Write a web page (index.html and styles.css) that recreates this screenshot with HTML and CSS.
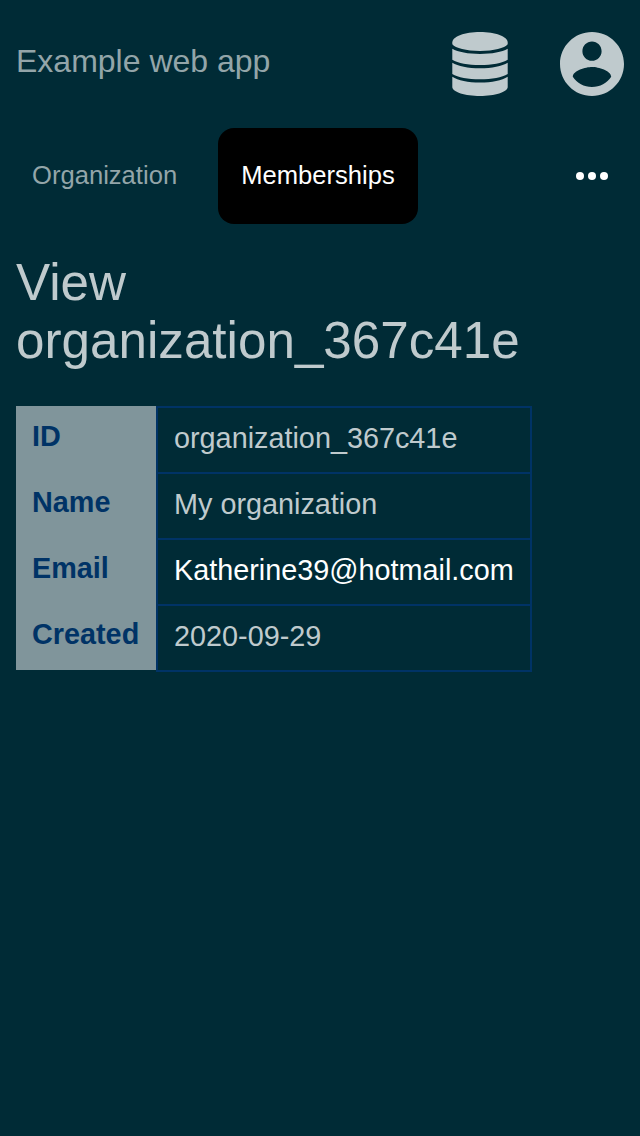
FILE: index.html
```html
<!DOCTYPE html>
<html lang="en">
<head>
<meta charset="utf-8">
<title>Example web app</title>
<link rel="stylesheet" href="styles.css">
</head>
<body>
<header class="header">
  <div class="brand">Example web app</div>
  <div class="actions">
    <svg class="icon" viewBox="0 0 64 64"><path d="M4.300 10.500C4.300 4.500 16.700 0 32 0S59.700 4.500 59.700 10.500V12.300C56.500 16.200 46 19 32 19S7.500 16.200 4.300 12.300Z"/><path d="M4.300 16.700C10 20 20 21.900 32 21.900S54 20 59.700 16.700V27.700C54 31 44 33 32 33S10 31 4.300 27.700Z"/><path d="M4.300 30.700C10 34.200 20 36.300 32 36.300S54 34.200 59.700 30.700V41.900C54 45.200 44 47.200 32 47.200S10 45.200 4.300 41.900Z"/><path d="M4.300 44.800C10 48.400 20 50.600 32 50.600S54 48.400 59.700 44.800V55C59.700 60 46.500 64 32 64S4.300 60 4.300 55Z"/></svg>
    <svg class="icon" viewBox="2 2 20 20"><path d="M12 2C6.480 2 2 6.480 2 12s4.480 10 10 10 10-4.480 10-10S17.520 2 12 2zm0 3c1.660 0 3 1.340 3 3s-1.340 3-3 3-3-1.340-3-3 1.340-3 3-3zm0 14.200c-2.500 0-4.710-1.280-6-3.220.030-1.990 4-3.080 6-3.080 1.990 0 5.970 1.090 6 3.080-1.290 1.940-3.500 3.220-6 3.220z"/></svg>
  </div>
</header>
<nav class="nav">
  <a class="tab">Organization</a>
  <a class="tab tab-active">Memberships</a>
  <svg class="more" viewBox="0 0 32 8"><circle cx="4" cy="4" r="4"/><circle cx="16" cy="4" r="4"/><circle cx="28" cy="4" r="4"/></svg>
</nav>
<main class="content">
  <h1 class="title">View organization_367c41e</h1>
  <dl class="details">
    <dt class="label">ID</dt><dd class="value">organization_367c41e</dd>
    <dt class="label">Name</dt><dd class="value">My organization</dd>
    <dt class="label">Email</dt><dd class="value value-link">Katherine39@hotmail.com</dd>
    <dt class="label">Created</dt><dd class="value">2020-09-29</dd>
  </dl>
</main>
</body>
</html>
```
FILE: styles.css
```css
* { box-sizing: border-box; }

body {
  margin: 0;
  min-height: 100vh;
  background: #002b36;
  color: #bfcacd;
  font-family: "Liberation Sans", Arial, sans-serif;
}

.header {
  display: flex;
  justify-content: space-between;
  align-items: center;
  height: 128px;
  padding: 0 16px;
}

.brand {
  padding-bottom: 6px;
  font-size: 32px;
  line-height: 36px;
  color: #93a5a9;
}

.actions { display: flex; gap: 48px; }

.icon {
  width: 64px;
  height: 64px;
  fill: #bfcacd;
}

.nav {
  display: flex;
  align-items: center;
  height: 96px;
  padding: 0 32px 0 16px;
  font-size: 25.6px;
  line-height: 94px;
}

.tab {
  width: 202px;
  height: 96px;
  padding-left: 16px;
  color: #93a5a9;
}

.tab-active {
  width: 200px;
  padding: 0;
  border-radius: 16px;
  background: #000;
  color: #fff;
  text-align: center;
}

.more {
  width: 32px;
  height: 8px;
  margin-left: auto;
  fill: #fff;
}

.content { padding: 30px 16px; }

.title {
  margin: 0 0 36px;
  font-size: 51.2px;
  font-weight: 400;
  line-height: 58px;
}

.details {
  display: grid;
  grid-template-columns: 140px 376px;
  grid-auto-rows: 66px;
  margin: 0;
  font-size: 28.8px;
  line-height: 32px;
}

.label {
  padding: 14px 16px;
  background: #80959b;
  color: #003366;
  font-weight: 700;
}

.value {
  height: 68px;
  margin: 0;
  padding: 14px 16px;
  border: 2px solid #003366;
}

.value-link { color: #fff; }
```
